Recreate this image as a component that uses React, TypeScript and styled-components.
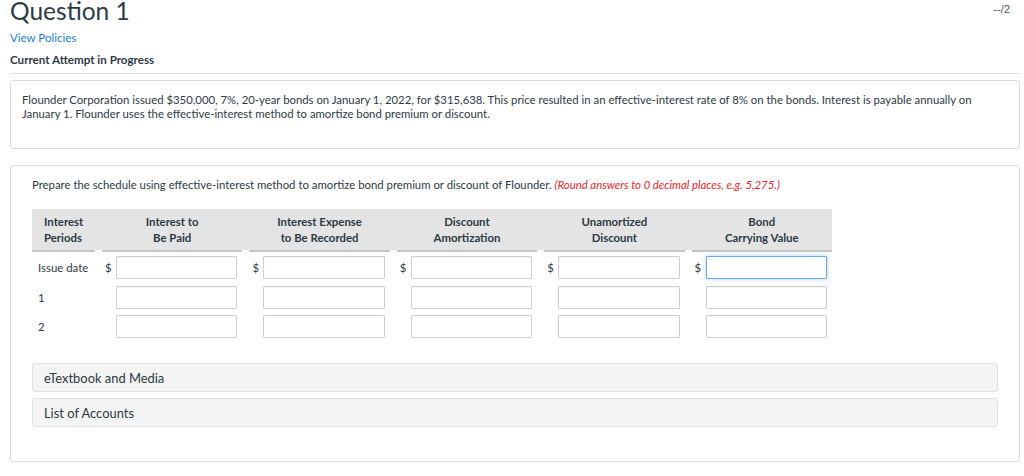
import React from "react";
import styled, { createGlobalStyle } from "styled-components";

const GlobalStyle = createGlobalStyle`
  body {
    margin: 0;
    background: #fff;
    font-family: Lato, "Open Sans", sans-serif;
    color: #2d3b45;
  }
`;

const Page = styled.div`
  padding: 0 4px 0 10px;
  width: 1010px;
`;

const TopRow = styled.div`
  display: flex;
  justify-content: space-between;
  align-items: flex-start;
`;

const Title = styled.h1`
  margin: 0;
  font-size: 24.5px;
  line-height: 22px;
  font-weight: 400;
  color: #2d3b45;
`;

const Score = styled.span`
  font-family: "Liberation Sans", Arial, sans-serif;
  font-size: 11px;
  color: #555;
  margin: 3px 10px 0 0;
`;

const PolicyLink = styled.a`
  display: block;
  margin-top: 9px;
  font-size: 11.5px;
  line-height: 14px;
  color: #1a7ed6;
  text-decoration: none;
`;

const Attempt = styled.div`
  margin-top: 8px;
  font-size: 11.6px;
  line-height: 14px;
  font-weight: 700;
  color: #2d3b45;
`;

const Divider = styled.hr`
  margin: 6px 0 0;
  border: 0;
  border-top: 1px solid #e3e3e3;
`;

const Card = styled.div<{ $top: number; $pad: string }>`
  margin-top: ${(p) => p.$top}px;
  border: 1px solid #dcdcdc;
  border-radius: 3px;
  padding: ${(p) => p.$pad};
`;

const Body = styled.p`
  margin: 0;
  font-size: 11.35px;
  line-height: 14px;
  color: #2d3b45;
`;

const Hint = styled.em`
  color: #e8262b;
`;

const Table = styled.div`
  margin-top: 17px;
  width: 800px;
`;

const Grid = styled.div`
  display: grid;
  grid-template-columns: 63px repeat(5, minmax(0, 1fr));
  column-gap: 7px;
  align-items: center;
`;

const HeadRow = styled(Grid)`
  background: linear-gradient(#e4e4e4, #e4e4e4) top / 100% calc(100% - 2px) no-repeat;
`;

const HeadCell = styled.div<{ $left?: boolean }>`
  padding: 5px 0 4px ${(p) => (p.$left ? "12px" : "0")};
  text-align: ${(p) => (p.$left ? "left" : "center")};
  font-size: 11.4px;
  line-height: 16px;
  font-weight: 700;
  color: #2d3b45;
  border-bottom: 2px solid #c4c4c4;
  align-self: stretch;
`;

const BodyRow = styled(Grid)<{ $top: number }>`
  margin-top: ${(p) => p.$top}px;
`;

const RowLabel = styled.div`
  padding-left: 6px;
  font-size: 11.4px;
  color: #2d3b45;
`;

const Cell = styled.div`
  display: flex;
  align-items: center;
  padding-right: 5px;
`;

const Dollar = styled.span`
  width: 14px;
  flex: none;
  padding-left: 3px;
  box-sizing: border-box;
  font-size: 11.4px;
  color: #2d3b45;
`;

const Field = styled.input<{ $focus?: boolean }>`
  flex: 1;
  width: 0;
  min-width: 0;
  height: 23px;
  box-sizing: border-box;
  border: 1px solid ${(p) => (p.$focus ? "#6aa9e4" : "#cfcfcf")};
  border-radius: 1px;
  box-shadow: ${(p) =>
    p.$focus ? "0 0 4px rgba(102,168,228,0.55)" : "inset 0 1px 1px rgba(0,0,0,0.04)"};
  outline: none;
  font-family: inherit;
`;

const Bars = styled.div`
  margin-top: 25px;
  display: flex;
  flex-direction: column;
  gap: 6px;
`;

const Bar = styled.div`
  height: 29px;
  box-sizing: border-box;
  display: flex;
  align-items: center;
  padding-left: 11px;
  background: #f4f4f4;
  border: 1px solid #e1e1e1;
  border-radius: 3px;
  font-size: 12.9px;
  color: #2d3b45;
`;

const headers = [
  ["Interest to", "Be Paid"],
  ["Interest Expense", "to Be Recorded"],
  ["Discount", "Amortization"],
  ["Unamortized", "Discount"],
  ["Bond", "Carrying Value"],
];

const rows = [
  { label: "Issue date", dollars: true, top: 4 },
  { label: "1", dollars: false, top: 7 },
  { label: "2", dollars: false, top: 6 },
];

export default function App() {
  return (
    <Page>
      <GlobalStyle />
      <TopRow>
        <Title>Question 1</Title>
        <Score>--/2</Score>
      </TopRow>
      <PolicyLink href="#">View Policies</PolicyLink>
      <Attempt>Current Attempt in Progress</Attempt>
      <Divider />

      <Card $top={6} $pad="12px 11px 27px">
        <Body>
          Flounder Corporation issued $350,000, 7%, 20-year bonds on January 1, 2022, for $315,638. This price
          resulted in an effective-interest rate of 8% on the bonds. Interest is payable annually on
          <br />
          January 1. Flounder uses the effective-interest method to amortize bond premium or discount.
        </Body>
      </Card>

      <Card $top={16} $pad="12px 21px 34px">
        <Body>
          Prepare the schedule using effective-interest method to amortize bond premium or discount of Flounder.{" "}
          <Hint>(Round answers to 0 decimal places, e.g. 5,275.)</Hint>
        </Body>

        <Table>
          <HeadRow>
            <HeadCell $left>
              Interest
              <br />
              Periods
            </HeadCell>
            {headers.map(([a, b]) => (
              <HeadCell key={a + b}>
                {a}
                <br />
                {b}
              </HeadCell>
            ))}
          </HeadRow>
          {rows.map((r) => (
            <BodyRow key={r.label} $top={r.top}>
              <RowLabel>{r.label}</RowLabel>
              {headers.map((h, i) => (
                <Cell key={i}>
                  <Dollar>{r.dollars ? "$" : ""}</Dollar>
                  <Field $focus={r.dollars && i === 4} />
                </Cell>
              ))}
            </BodyRow>
          ))}
        </Table>

        <Bars>
          <Bar>eTextbook and Media</Bar>
          <Bar>List of Accounts</Bar>
        </Bars>
      </Card>
    </Page>
  );
}
